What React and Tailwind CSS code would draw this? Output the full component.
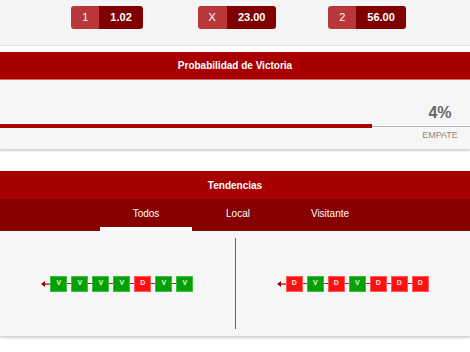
import React from 'react';

const odds = [
  { label: '1', value: '1.02' },
  { label: 'X', value: '23.00' },
  { label: '2', value: '56.00' },
];

const tabs = ['Todos', 'Local', 'Visitante'];

const localForm = ['V', 'V', 'V', 'V', 'D', 'V', 'V'];
const awayForm = ['D', 'V', 'D', 'V', 'D', 'D', 'D'];

function FormRow({ results }) {
  return (
    <div className="flex items-center">
      <svg width="9" height="8" viewBox="0 0 9 8" className="block">
        <path d="M0 4 L4 1 L4 7 Z" fill="#a00000" />
        <rect x="3" y="3.5" width="6" height="1.2" fill="#a00000" />
      </svg>
      {results.map((r, i) => (
        <React.Fragment key={i}>
          {i > 0 && <div className="w-[4px] h-px bg-[#9a2a2a]" />}
          <div
            className={`w-[17px] h-[16px] flex items-center justify-center text-[7px] font-bold text-white/90 border ${
              r === 'V' ? 'bg-[#05a005] border-[#3cbf3c]' : 'bg-[#ff1010] border-[#ff5a5a]'
            }`}
          >
            {r}
          </div>
        </React.Fragment>
      ))}
    </div>
  );
}

export default function App() {
  return (
    <div className="w-[470px] h-[352px] bg-white overflow-hidden font-['Liberation_Sans',Arial,sans-serif]">
      {/* Odds */}
      <div className="bg-[#f5f5f5] h-[46px] border-b border-[#e2e2e2] pt-[6px]">
        <div className="flex ml-[42px]">
          {odds.map((o) => (
            <div key={o.label} className="w-[130px] flex justify-center">
              <div className="flex h-[23px] rounded-[3px] overflow-hidden text-white text-[11px]">
                <div className="bg-[#b9363a] flex items-center px-[11px]">{o.label}</div>
                <div className="bg-[#7e0000] flex items-center px-[11px] font-bold">{o.value}</div>
              </div>
            </div>
          ))}
        </div>
      </div>

      {/* Probabilidad */}
      <div className="mt-[6px] shadow-[0_2px_2px_rgba(0,0,0,0.18)]">
        <div className="h-[28px] bg-[#a80000] border-b border-[#d66a6a] flex items-center justify-center text-white text-[10px] font-bold">
          Probabilidad de Victoria
        </div>
        <div className="bg-[#f6f6f6] h-[69px] flex flex-col">
          <div className="pt-[24px] flex justify-end pr-[10px]">
            <span className="w-[40px] text-center text-[16px] leading-[18px] font-bold text-[#666]">4%</span>
          </div>
          <div className="mt-[2px] flex items-center h-[4px]">
            <div className="w-[372px] h-full bg-[#a80000]" />
            <div className="flex-1 h-px bg-[#b5b5b5]" />
          </div>
          <div className="mt-[2px] flex justify-end pr-[10px]">
            <span className="w-[40px] text-center text-[9px] leading-[11px] text-[#888]">EMPATE</span>
          </div>
        </div>
      </div>

      {/* Tendencias */}
      <div className="mt-[22px] shadow-[0_2px_2px_rgba(0,0,0,0.18)]">
        <div className="h-[28px] bg-[#a80000] flex items-center justify-center text-white text-[10px] font-bold">
          Tendencias
        </div>
        <div className="h-[32px] bg-[#870000] flex">
          <div className="flex ml-[100px]">
            {tabs.map((t, i) => (
              <div key={t} className="w-[92px] flex flex-col">
                <div className="flex-1 flex items-center justify-center text-white text-[10px]">{t}</div>
                <div className={`h-[4px] ${i === 0 ? 'bg-white' : ''}`} />
              </div>
            ))}
          </div>
        </div>
        <div className="bg-[#f6f6f6] h-[105px] flex items-center">
          <div className="flex-1 flex justify-center">
            <FormRow results={localForm} />
          </div>
          <div className="w-px h-[91px] bg-[#666]" />
          <div className="flex-1 flex justify-center">
            <FormRow results={awayForm} />
          </div>
        </div>
      </div>
    </div>
  );
}
